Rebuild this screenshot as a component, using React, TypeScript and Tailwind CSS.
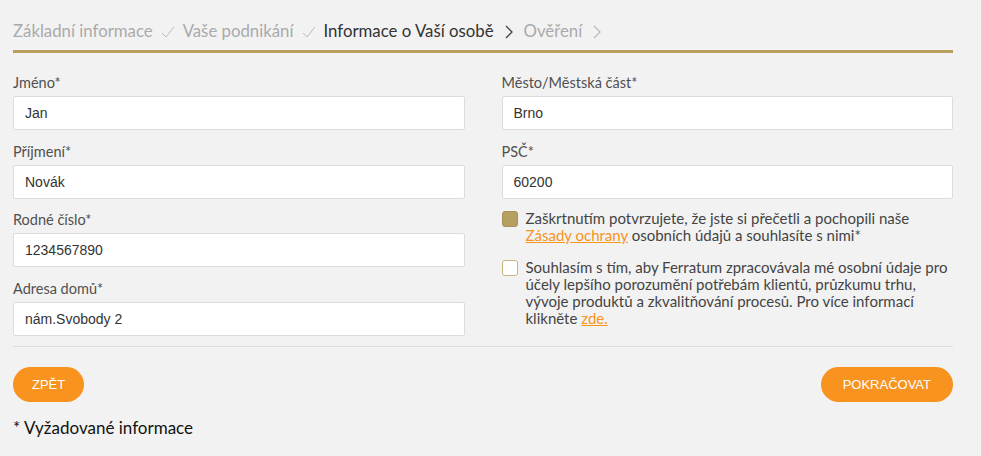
import React from "react";

const steps = [
  { label: "Základní informace", state: "done" },
  { label: "Vaše podnikání", state: "done" },
  { label: "Informace o Vaší osobě", state: "active" },
  { label: "Ověření", state: "todo" },
];

function Field({ label, value }: { label: string; value: string }) {
  return (
    <div className="flex flex-col">
      <label className="h-[18px] text-[14.5px] leading-[18px] text-[#505050]">{label}</label>
      <input
        readOnly
        value={value}
        className="mt-[4px] h-[34px] rounded-[2px] border border-[#dcdcdc] bg-white px-[11px] font-['Liberation_Sans',sans-serif] text-[14px] text-[#333] outline-none"
      />
    </div>
  );
}

function Check({ checked }: { checked?: boolean }) {
  return (
    <span
      className={
        checked
          ? "mt-[1px] h-[16px] w-[16px] flex-shrink-0 rounded-[3px] border border-[#a8925a] bg-[#b5a05f]"
          : "mt-[1px] h-[16px] w-[16px] flex-shrink-0 rounded-[3px] border border-[#c9b57e] bg-white"
      }
    />
  );
}

export default function App() {
  return (
    <div className="min-h-[456px] w-full bg-[#f2f2f2] px-[13px] pt-[21px] font-['Lato',sans-serif]">
      {/* Steps */}
      <div className="flex h-[20px] items-center text-[16.8px] leading-[20px]">
        {steps.map((s) => (
          <div key={s.label} className="flex items-center">
            <span className={s.state === "active" ? "text-[#333]" : "text-[#aaa]"}>{s.label}</span>
            {s.state === "done" ? (
              <svg width="14" height="12" viewBox="0 0 14 12" className="mx-[8px] mt-[2px]">
                <path d="M1 7 L5 11 L13 1" fill="none" stroke="#bbb" strokeWidth="1" />
              </svg>
            ) : (
              <svg width="8" height="14" viewBox="0 0 8 14" className="mx-[11px] mt-[1px]">
                <path
                  d="M1 1 L7 7 L1 13"
                  fill="none"
                  stroke={s.state === "active" ? "#444" : "#bbb"}
                  strokeWidth="1.3"
                />
              </svg>
            )}
          </div>
        ))}
      </div>
      <div className="mt-[9px] h-[3px] w-[940px] bg-[#b8a15d]" />

      {/* Form */}
      <div className="mt-[21px] grid w-[940px] grid-cols-2 gap-x-[37px]">
        <div className="flex flex-col gap-[12.7px]">
          <Field label="Jméno*" value="Jan" />
          <Field label="Příjmení*" value="Novák" />
          <Field label="Rodné číslo*" value="1234567890" />
          <Field label="Adresa domů*" value="nám.Svobody 2" />
        </div>
        <div className="flex flex-col">
          <div className="flex flex-col gap-[12.7px]">
            <Field label="Město/Městská část*" value="Brno" />
            <Field label="PSČ*" value="60200" />
          </div>
          <div className="mt-[11px] flex gap-[8px] text-[15px] leading-[17px] text-[#444]">
            <Check checked />
            <p>
              Zaškrtnutím potvrzujete, že jste si přečetli a pochopili naše{" "}
              <a className="text-[#f7941d] underline">Zásady ochrany</a> osobních údajů a souhlasíte s
              nimi*
            </p>
          </div>
          <div className="mt-[15px] flex gap-[8px] text-[15px] leading-[17px] text-[#444]">
            <Check />
            <p>
              Souhlasím s tím, aby Ferratum zpracovávala mé osobní údaje pro účely lepšího porozumění
              potřebám klientů, průzkumu trhu, vývoje produktů a zkvalitňování procesů. Pro více informací
              klikněte <a className="text-[#f7941d] underline">zde.</a>
            </p>
          </div>
        </div>
      </div>

      <div className="mt-[10px] h-px w-[940px] bg-[#dcdcdc]" />

      <div className="mt-[20px] flex w-[940px] justify-between">
        <button className="h-[35px] rounded-full bg-[#f7931e] px-[19px] font-['Liberation_Sans',sans-serif] text-[13px] text-white">
          ZPĚT
        </button>
        <button className="h-[35px] rounded-full bg-[#f7931e] px-[22px] font-['Liberation_Sans',sans-serif] text-[13px] text-white">
          POKRAČOVAT
        </button>
      </div>

      <p className="mt-[16px] text-[17px] leading-[20px] text-[#111]">* Vyžadované informace</p>
    </div>
  );
}
